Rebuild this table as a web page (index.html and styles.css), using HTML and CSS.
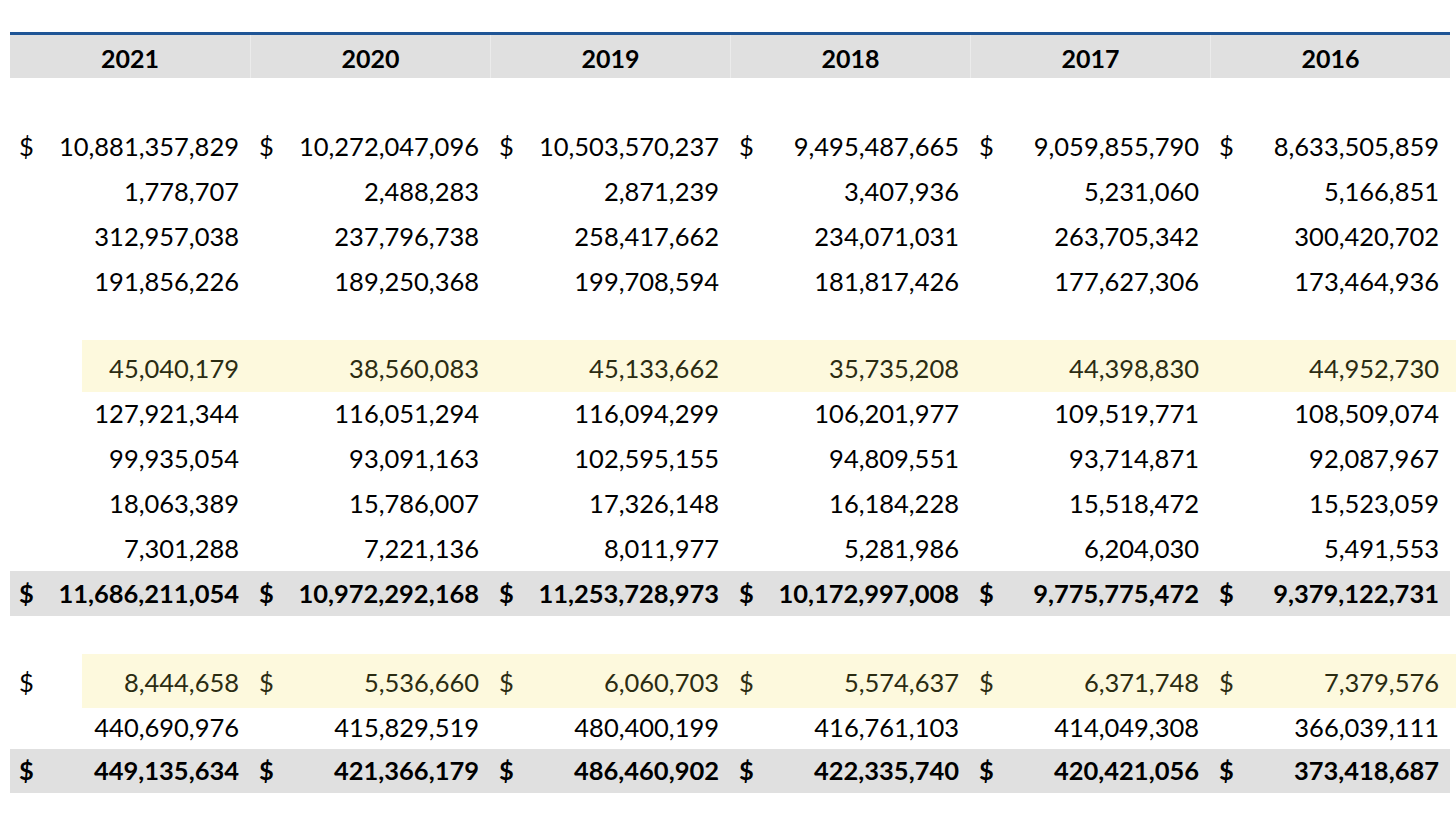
FILE: index.html
```html
<!DOCTYPE html>
<html>
<head>
<meta charset="utf-8">
<link rel="stylesheet" href="styles.css">
</head>
<body>
<div class="sheet">
  <div class="row head">
    <div class="hcell">2021</div><div class="hcell">2020</div><div class="hcell">2019</div><div class="hcell">2018</div><div class="hcell">2017</div><div class="hcell">2016</div>
  </div>
  <div class="gap g1"></div>
  <div class="row r45">
    <div class="cell"><span class="cur">$</span><span>10,881,357,829</span></div>
    <div class="cell"><span class="cur">$</span><span>10,272,047,096</span></div>
    <div class="cell"><span class="cur">$</span><span>10,503,570,237</span></div>
    <div class="cell"><span class="cur">$</span><span>9,495,487,665</span></div>
    <div class="cell"><span class="cur">$</span><span>9,059,855,790</span></div>
    <div class="cell"><span class="cur">$</span><span>8,633,505,859</span></div>
  </div>
  <div class="row r45">
    <div class="cell"><span></span><span>1,778,707</span></div>
    <div class="cell"><span></span><span>2,488,283</span></div>
    <div class="cell"><span></span><span>2,871,239</span></div>
    <div class="cell"><span></span><span>3,407,936</span></div>
    <div class="cell"><span></span><span>5,231,060</span></div>
    <div class="cell"><span></span><span>5,166,851</span></div>
  </div>
  <div class="row r45">
    <div class="cell"><span></span><span>312,957,038</span></div>
    <div class="cell"><span></span><span>237,796,738</span></div>
    <div class="cell"><span></span><span>258,417,662</span></div>
    <div class="cell"><span></span><span>234,071,031</span></div>
    <div class="cell"><span></span><span>263,705,342</span></div>
    <div class="cell"><span></span><span>300,420,702</span></div>
  </div>
  <div class="row r45">
    <div class="cell"><span></span><span>191,856,226</span></div>
    <div class="cell"><span></span><span>189,250,368</span></div>
    <div class="cell"><span></span><span>199,708,594</span></div>
    <div class="cell"><span></span><span>181,817,426</span></div>
    <div class="cell"><span></span><span>177,627,306</span></div>
    <div class="cell"><span></span><span>173,464,936</span></div>
  </div>
  <div class="gap g2"></div>
  <div class="row hl hl1">
    <div class="cell"><span></span><span>45,040,179</span></div>
    <div class="cell"><span></span><span>38,560,083</span></div>
    <div class="cell"><span></span><span>45,133,662</span></div>
    <div class="cell"><span></span><span>35,735,208</span></div>
    <div class="cell"><span></span><span>44,398,830</span></div>
    <div class="cell"><span></span><span>44,952,730</span></div>
  </div>
  <div class="row r45">
    <div class="cell"><span></span><span>127,921,344</span></div>
    <div class="cell"><span></span><span>116,051,294</span></div>
    <div class="cell"><span></span><span>116,094,299</span></div>
    <div class="cell"><span></span><span>106,201,977</span></div>
    <div class="cell"><span></span><span>109,519,771</span></div>
    <div class="cell"><span></span><span>108,509,074</span></div>
  </div>
  <div class="row r45">
    <div class="cell"><span></span><span>99,935,054</span></div>
    <div class="cell"><span></span><span>93,091,163</span></div>
    <div class="cell"><span></span><span>102,595,155</span></div>
    <div class="cell"><span></span><span>94,809,551</span></div>
    <div class="cell"><span></span><span>93,714,871</span></div>
    <div class="cell"><span></span><span>92,087,967</span></div>
  </div>
  <div class="row r45">
    <div class="cell"><span></span><span>18,063,389</span></div>
    <div class="cell"><span></span><span>15,786,007</span></div>
    <div class="cell"><span></span><span>17,326,148</span></div>
    <div class="cell"><span></span><span>16,184,228</span></div>
    <div class="cell"><span></span><span>15,518,472</span></div>
    <div class="cell"><span></span><span>15,523,059</span></div>
  </div>
  <div class="row r44">
    <div class="cell"><span></span><span>7,301,288</span></div>
    <div class="cell"><span></span><span>7,221,136</span></div>
    <div class="cell"><span></span><span>8,011,977</span></div>
    <div class="cell"><span></span><span>5,281,986</span></div>
    <div class="cell"><span></span><span>6,204,030</span></div>
    <div class="cell"><span></span><span>5,491,553</span></div>
  </div>
  <div class="row total t1">
    <div class="cell"><span class="cur">$</span><span>11,686,211,054</span></div>
    <div class="cell"><span class="cur">$</span><span>10,972,292,168</span></div>
    <div class="cell"><span class="cur">$</span><span>11,253,728,973</span></div>
    <div class="cell"><span class="cur">$</span><span>10,172,997,008</span></div>
    <div class="cell"><span class="cur">$</span><span>9,775,775,472</span></div>
    <div class="cell"><span class="cur">$</span><span>9,379,122,731</span></div>
  </div>
  <div class="gap g3"></div>
  <div class="row hl hl2">
    <div class="cell"><span class="cur">$</span><span>8,444,658</span></div>
    <div class="cell"><span class="cur">$</span><span>5,536,660</span></div>
    <div class="cell"><span class="cur">$</span><span>6,060,703</span></div>
    <div class="cell"><span class="cur">$</span><span>5,574,637</span></div>
    <div class="cell"><span class="cur">$</span><span>6,371,748</span></div>
    <div class="cell"><span class="cur">$</span><span>7,379,576</span></div>
  </div>
  <div class="row r41">
    <div class="cell"><span></span><span>440,690,976</span></div>
    <div class="cell"><span></span><span>415,829,519</span></div>
    <div class="cell"><span></span><span>480,400,199</span></div>
    <div class="cell"><span></span><span>416,761,103</span></div>
    <div class="cell"><span></span><span>414,049,308</span></div>
    <div class="cell"><span></span><span>366,039,111</span></div>
  </div>
  <div class="row total t2">
    <div class="cell"><span class="cur">$</span><span>449,135,634</span></div>
    <div class="cell"><span class="cur">$</span><span>421,366,179</span></div>
    <div class="cell"><span class="cur">$</span><span>486,460,902</span></div>
    <div class="cell"><span class="cur">$</span><span>422,335,740</span></div>
    <div class="cell"><span class="cur">$</span><span>420,421,056</span></div>
    <div class="cell"><span class="cur">$</span><span>373,418,687</span></div>
  </div>
</div>
</body>
</html>
```
FILE: styles.css
```css
html, body {
  margin: 0;
  padding: 0;
  background: #ffffff;
}
body {
  font-family: Lato, "Open Sans", sans-serif;
  font-size: 25.5px;
  color: #000000;
}
.sheet {
  padding-top: 32px;
  padding-left: 10px;
  display: flex;
  flex-direction: column;
}
.row {
  display: grid;
  grid-template-columns: repeat(6, 240px);
  width: 1440px;
}
.head {
  height: 43px;
  border-top: 3px solid #1f5596;
  background: #e0e0e0;
  font-weight: bold;
  font-size: 25px;
}
.hcell {
  display: flex;
  align-items: center;
  justify-content: center;
  padding-top: 3px;
  border-left: 1px solid #ebebeb;
}
.hcell:first-child {
  border-left: none;
}
.gap.g1 { height: 47px; }
.gap.g2 { height: 35px; }
.gap.g3 { height: 38px; }
.r45 { height: 45px; }
.r44 { height: 44px; }
.r41 { height: 41px; }
.cell {
  display: flex;
  align-items: center;
  justify-content: space-between;
  padding: 0 11px 3px 9px;
}
.r41 .cell { padding-bottom: 4px; }
.hl {
  width: 1446px;
  grid-template-columns: repeat(6, 240px) 6px;
  background: linear-gradient(to right, transparent 72px, #fdf9dd 72px);
  color: #2b2c12;
}
.hl .cell { padding-top: 4px; padding-bottom: 0; }
.hl1 { height: 52px; }
.hl2 { height: 54px; }
.hl2 .cell { padding-top: 2px; }
.hl2 .cell:first-child .cur { color: #000000; }
.total {
  background: #e0e0e0;
  font-weight: bold;
}
.total .cell { padding-bottom: 2px; }
.t1 { height: 45px; }
.t2 { height: 44px; }
```
